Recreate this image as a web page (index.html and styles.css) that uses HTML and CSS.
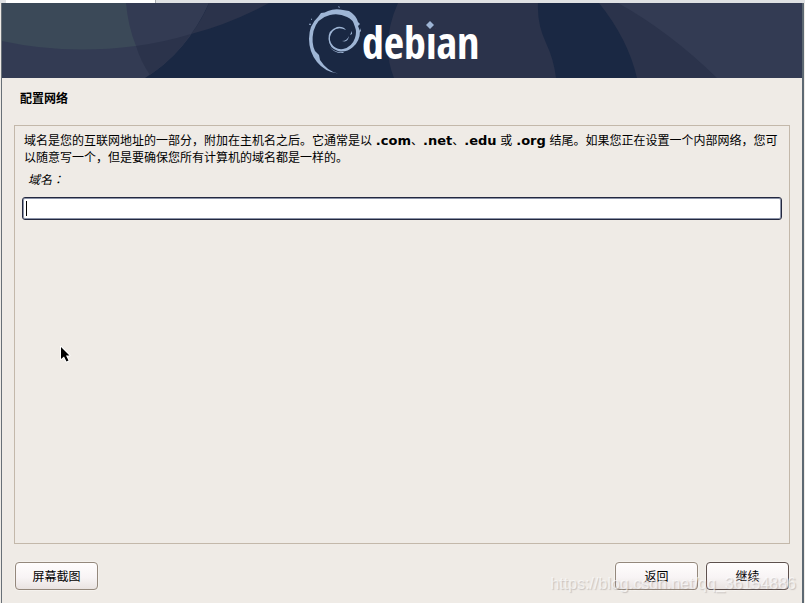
FILE: index.html
```html
<!DOCTYPE html>
<html lang="zh-CN">
<head>
<meta charset="utf-8">
<title>配置网络</title>
<link rel="stylesheet" href="styles.css">
</head>
<body>
<div class="tabstrip"><span class="tab"></span></div>
<div class="window">
  <header class="banner">
    <svg viewBox="2 3 800 75" preserveAspectRatio="xMidYMid slice" role="img" aria-label="debian">
      <rect x="2" y="3" width="800" height="75" fill="#1a2843"/>
      <path fill="#333b53" d="M2 3H209Q187 52 145 78H2Z"/>
      <path fill="#2b334b" d="M209 3H269Q230 24 191 34Q202 20 209 3Z"/>
      <path fill="#2b334b" d="M191 34Q165 42 136 46Q141 62 150 75Q175 58 191 34Z"/>
      <path fill="#3b4958" d="M2 3H126Q128 26 136 46Q65 55 2 41Z"/>
      <path fill="#2b334b" d="M398 3H538Q537 24 546 43Q554 60 556 78H394Q380 43 398 3Z"/>
      <path fill="#2b334b" d="M599 3H802V78H637Q628 39 599 3Z"/>
      <path fill="#333b53" d="M618 3H802V78H717Q670 32 618 3Z"/>
      <g fill="#9eb5d5">
        <path d="M338 73.600Q325 72 317 62Q309 52 309 39Q309 25 318 17L321 13Q325 13 328 11Q335 8 343 10L349 11Q356 15 358 22L360 24L358 26L360 31Q360 41 353 47Q346 53 338 51Q329 48 328.500 39Q328 30 337 27Q343 26 346 30Q338 26 333 31Q328 37 331 43Q335 50 343 49Q352 47 355 38Q357 32 355 27Q353 19 347 17Q339 13 330 15Q317 18 313.500 31Q311 43 315 51L319 55L320 60Q327 71 338 73.600Z"/>
        <path d="M329 46Q334 53 343 52L344 53Q334 54 329 46ZM342 41Q347 41 349 36Q348 43 342 41ZM350 35L352 31L352 34ZM309 25L310 23L311 25ZM311 20H312V18ZM338 7L340 8L339 6ZM360 31L361 28L361 32Z"/>
      </g>
      <text class="wordmark" x="362" y="59">debian</text>
      <rect x="425" y="20" width="10" height="13" fill="#2b334b"/>
      <path fill="#9eb5d5" d="M430 21L434 25L430 29L426 25Z"/>
    </svg>
  </header>
  <main>
    <h1>配置网络</h1>
    <section class="panel">
      <p>域名是您的互联网地址的一部分，附加在主机名之后。它通常是以 <b>.com</b>、<b>.net</b>、<b>.edu</b> 或 <b>.org</b> 结尾。如果您正在设置一个内部网络，您可以随意写一个，但是要确保您所有计算机的域名都是一样的。</p>
      <label for="domain">域名：</label>
      <div class="field"><input id="domain" type="text" autocomplete="off"><span class="caret"></span></div>
    </section>
    <footer>
      <button type="button">屏幕截图</button>
      <span class="spacer"></span>
      <button type="button">返回</button>
      <button type="button" class="default">继续</button>
    </footer>
  </main>
</div>
<span class="watermark">https://blog.csdn.net/qq_36154886</span>
<svg class="pointer" viewBox="0 0 12 18" aria-hidden="true"><path d="M1 1V13L4 10.500L6.500 15.500L8.500 14.500L6 9.500H9.500Z" fill="#000" stroke="#fff" stroke-width="2" stroke-linejoin="round" paint-order="stroke"/></svg>
</body>
</html>
```

FILE: styles.css
```css
* { box-sizing: border-box; }
body {
  margin: 0;
  min-height: 100vh;
  display: flex;
  flex-direction: column;
  position: relative;
  overflow: hidden;
  background: #efebe6;
  color: #000;
  font: 12px/17px "DejaVu Sans", "Noto Sans CJK SC", sans-serif;
}
.tabstrip { height: 3px; padding-left: 6px; background: #dfe1e3; }
.tab { display: block; width: 150px; height: 3px; background: #fff; border-right: 1px solid #a9adb1; }
.window {
  flex: 1;
  display: flex;
  flex-direction: column;
  border-left: 1px solid #687078;
  border-right: 2px solid #5c6872;
  margin: 0 1px;
}
.banner { height: 75px; }
.banner svg { display: block; width: 100%; height: 100%; }
.wordmark {
  font: 44px "Liberation Sans Narrow", "Open Sans Condensed", "Roboto Condensed", "Noto Sans Condensed", Lato, sans-serif;
  fill: #fff;
}
main { flex: 1; display: flex; flex-direction: column; padding: 13px 12px; }
h1 { margin: 0 6px 17px; font-size: 12px; line-height: 17px; font-weight: 700; }
.panel { flex: 1; padding: 7px; border: 1px solid #c3b8aa; }
p { margin: 0 2px 3px; }
b { font-size: 13px; line-height: 1; font-weight: 700; }
label {
  display: block;
  margin: 0 6px 10px;
  font-family: "Noto Sans CJK TC", sans-serif;
  font-feature-settings: "locl" 0;
  font-style: italic;
}
.field { position: relative; }
input {
  display: block;
  width: 100%;
  height: 23px;
  padding: 2px 4px;
  border: 1px solid #23283f;
  border-radius: 3px;
  box-shadow: inset 0 0 0 1px #8b93a8;
  background: #fff;
  font: inherit;
  outline: none;
}
.caret { position: absolute; left: 4px; top: 4px; width: 1px; height: 15px; background: #000; }
footer { display: flex; gap: 8px; padding: 0 1px; margin-top: 18px; }
.spacer { flex: 1; }
button {
  width: 83px;
  height: 28px;
  padding: 2px 0 0;
  border: 1px solid #94887c;
  border-radius: 4px;
  background: linear-gradient(#fffdfd, #f8f4f5 55%, #e9e3e1);
  box-shadow: 0 0 0 1px #f5f2ee;
  color: #000;
  font: inherit;
}
.default { border-color: #5d504d; }
.watermark {
  position: absolute;
  right: 9px;
  bottom: 9px;
  font: 16px/20px "Liberation Sans", sans-serif;
  color: rgba(255, 255, 255, 0.6);
  text-shadow: 1px 1px 1px rgba(130, 120, 120, 0.35);
  pointer-events: none;
}
.pointer { position: absolute; left: 60px; top: 346px; width: 12px; height: 18px; }
```
